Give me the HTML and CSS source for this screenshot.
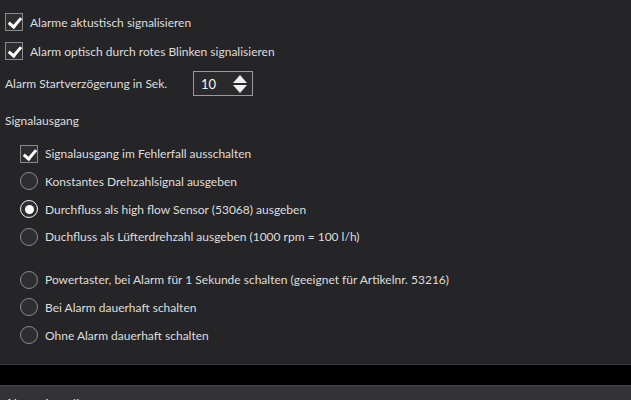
FILE: index.html
```html
<!DOCTYPE html>
<html lang="de">
<head>
<meta charset="utf-8">
<link rel="stylesheet" href="styles.css">
</head>
<body>
<div class="panel">
  <label class="row"><span class="cb checked"></span><span>Alarme aktustisch signalisieren</span></label>
  <label class="row"><span class="cb checked"></span><span>Alarm optisch durch rotes Blinken signalisieren</span></label>
  <div class="row delay">
    <span class="delay-label">Alarm Startverzögerung in Sek.</span>
    <span class="spin"><span class="spin-val">10</span>
      <svg class="spin-arrows" width="16" height="20" viewBox="0 0 16 20"><path d="M8 1 L15 9 L1 9 Z" fill="#f0f0f0"/><path d="M1 11 L15 11 L8 19 Z" fill="#f0f0f0"/></svg>
    </span>
  </div>
  <div class="section-title">Signalausgang</div>
  <div class="group">
    <label class="row"><span class="cb checked"></span><span>Signalausgang im Fehlerfall ausschalten</span></label>
    <label class="row"><span class="rb"></span><span>Konstantes Drehzahlsignal ausgeben</span></label>
    <label class="row"><span class="rb on"></span><span>Durchfluss als high flow Sensor (53068) ausgeben</span></label>
    <label class="row"><span class="rb"></span><span>Duchfluss als Lüfterdrehzahl ausgeben (1000 rpm = 100 l/h)</span></label>
    <div class="spacer"></div>
    <label class="row"><span class="rb"></span><span>Powertaster, bei Alarm für 1 Sekunde schalten (geeignet für Artikelnr. 53216)</span></label>
    <label class="row"><span class="rb"></span><span>Bei Alarm dauerhaft schalten</span></label>
    <label class="row"><span class="rb"></span><span>Ohne Alarm dauerhaft schalten</span></label>
  </div>
</div>
<div class="gap"></div>
<div class="panel2"><div class="panel2-title">Alarmeinstellungen</div></div>
</body>
</html>
```
FILE: styles.css
```css
* { box-sizing: border-box; }
html, body { margin: 0; padding: 0; background: #000; }
body {
  font-family: "Lato", "Noto Sans", sans-serif;
  font-size: 12px;
  color: #dedede;
  width: 631px;
  height: 400px;
  overflow: hidden;
}
.panel {
  background: #252527;
  height: 365px;
  padding: 13px 0 0 5px;
  border-bottom: 1px solid #3a3a3c;
}
.row {
  display: flex;
  align-items: center;
  height: 18px;
  margin-bottom: 11px;
}
.cb {
  width: 18px;
  height: 18px;
  border: 1.5px solid #8a8a8a;
  background: #2e2e30;
  margin-right: 7px;
  flex: none;
  position: relative;
}
.cb.checked::after {
  content: "";
  position: absolute;
  left: 5px;
  top: 1px;
  width: 5px;
  height: 10px;
  border: solid #fff;
  border-width: 0 3px 3px 0;
  transform: rotate(40deg);
}
.delay {
  height: 25px;
  margin-bottom: 16px;
}
.delay-label { width: 188px; }
.spin {
  display: flex;
  align-items: center;
  justify-content: space-between;
  width: 60px;
  height: 25px;
  border: 1.5px solid #9a9a9a;
  background: #2a2a2c;
  padding: 0 4px 0 7px;
  color: #f2f2f2;
  font-size: 13px;
}
.section-title { height: 18px; line-height: 18px; margin-bottom: 14.5px; }
.group { padding-left: 15px; }
.group .row { margin-bottom: 9.75px; }
.rb {
  width: 18px;
  height: 18px;
  border-radius: 50%;
  border: 1.5px solid #8a8a8a;
  background: #2e2e30;
  margin-right: 7px;
  flex: none;
  display: flex;
  align-items: center;
  justify-content: center;
}
.rb.on { border-color: #f0f0f0; background: #2e2e30; }
.rb.on::after {
  content: "";
  width: 9px;
  height: 9px;
  border-radius: 50%;
  background: #fff;
}
.spacer { height: 15px; }
.gap { height: 20px; background: #000; }
.panel2 {
  background: #333335;
  border-top: 1px solid #444446;
  height: 15px;
  padding: 9px 0 0 5px;
}
.panel2-title { font-size: 13px; line-height: 18px; color: #e0e0e0; }
```
